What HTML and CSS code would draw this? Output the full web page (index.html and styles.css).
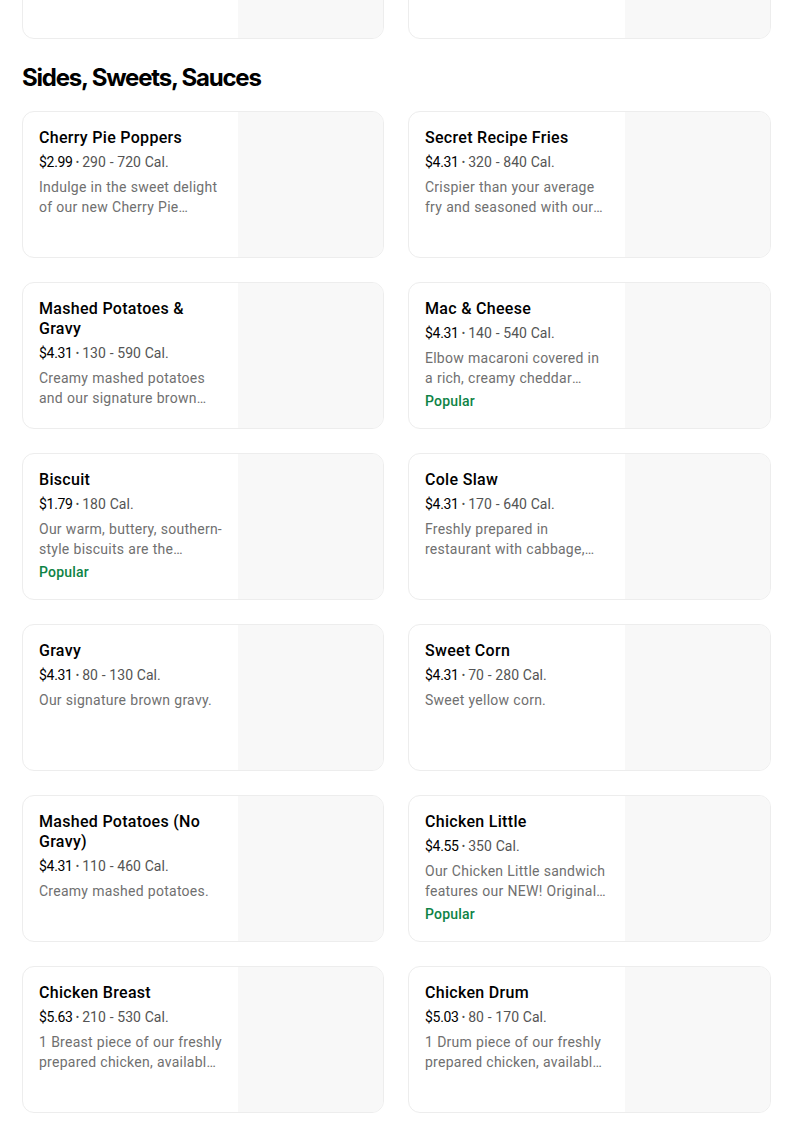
FILE: index.html
```html
<!DOCTYPE html>
<html>
<head>
<meta charset="utf-8">
<link rel="stylesheet" href="styles.css">
</head>
<body>
<div class="page">
  <div class="prev-row">
    <div class="grid">
      <div class="card"><div class="info"></div><div class="thumb"></div></div>
      <div class="card"><div class="info"></div><div class="thumb"></div></div>
    </div>
  </div>

  <h2 class="section-title">Sides, Sweets, Sauces</h2>

  <div class="grid">
    <div class="card">
      <div class="info">
        <div class="name">Cherry Pie Poppers</div>
        <div class="meta"><span class="price">$2.99</span><span class="dot">•</span>290 - 720 Cal.</div>
        <div class="desc">Indulge in the sweet delight of our new Cherry Pie Poppers, a bite-sized treat</div>
      </div>
      <div class="thumb"></div>
    </div>
    <div class="card">
      <div class="info">
        <div class="name">Secret Recipe Fries</div>
        <div class="meta"><span class="price">$4.31</span><span class="dot">•</span>320 - 840 Cal.</div>
        <div class="desc">Crispier than your average fry and seasoned with our secret recipe</div>
      </div>
      <div class="thumb"></div>
    </div>

    <div class="card">
      <div class="info">
        <div class="name">Mashed Potatoes &amp; Gravy</div>
        <div class="meta"><span class="price">$4.31</span><span class="dot">•</span>130 - 590 Cal.</div>
        <div class="desc">Creamy mashed potatoes and our signature brown gravy.</div>
      </div>
      <div class="thumb"></div>
    </div>
    <div class="card">
      <div class="info">
        <div class="name">Mac &amp; Cheese</div>
        <div class="meta"><span class="price">$4.31</span><span class="dot">•</span>140 - 540 Cal.</div>
        <div class="desc">Elbow macaroni covered in a rich, creamy cheddar cheese sauce.</div>
        <div class="popular">Popular</div>
      </div>
      <div class="thumb"></div>
    </div>

    <div class="card">
      <div class="info">
        <div class="name">Biscuit</div>
        <div class="meta"><span class="price">$1.79</span><span class="dot">•</span>180 Cal.</div>
        <div class="desc">Our warm, buttery, southern-style biscuits are the perfect side.</div>
        <div class="popular">Popular</div>
      </div>
      <div class="thumb"></div>
    </div>
    <div class="card">
      <div class="info">
        <div class="name">Cole Slaw</div>
        <div class="meta"><span class="price">$4.31</span><span class="dot">•</span>170 - 640 Cal.</div>
        <div class="desc">Freshly prepared in restaurant with cabbage, carrots and our signature dressing.</div>
      </div>
      <div class="thumb"></div>
    </div>

    <div class="card">
      <div class="info">
        <div class="name">Gravy</div>
        <div class="meta"><span class="price">$4.31</span><span class="dot">•</span>80 - 130 Cal.</div>
        <div class="desc">Our signature brown gravy.</div>
      </div>
      <div class="thumb"></div>
    </div>
    <div class="card">
      <div class="info">
        <div class="name">Sweet Corn</div>
        <div class="meta"><span class="price">$4.31</span><span class="dot">•</span>70 - 280 Cal.</div>
        <div class="desc">Sweet yellow corn.</div>
      </div>
      <div class="thumb"></div>
    </div>

    <div class="card">
      <div class="info">
        <div class="name">Mashed Potatoes (No Gravy)</div>
        <div class="meta"><span class="price">$4.31</span><span class="dot">•</span>110 - 460 Cal.</div>
        <div class="desc">Creamy mashed potatoes.</div>
      </div>
      <div class="thumb"></div>
    </div>
    <div class="card">
      <div class="info">
        <div class="name">Chicken Little</div>
        <div class="meta"><span class="price">$4.55</span><span class="dot">•</span>350 Cal.</div>
        <div class="desc">Our Chicken Little sandwich features our NEW! Original Recipe chicken.</div>
        <div class="popular">Popular</div>
      </div>
      <div class="thumb"></div>
    </div>

    <div class="card">
      <div class="info">
        <div class="name">Chicken Breast</div>
        <div class="meta"><span class="price">$5.63</span><span class="dot">•</span>210 - 530 Cal.</div>
        <div class="desc">1 Breast piece of our freshly prepared chicken, available in Original Recipe.</div>
      </div>
      <div class="thumb"></div>
    </div>
    <div class="card">
      <div class="info">
        <div class="name">Chicken Drum</div>
        <div class="meta"><span class="price">$5.03</span><span class="dot">•</span>80 - 170 Cal.</div>
        <div class="desc">1 Drum piece of our freshly prepared chicken, available in Original Recipe.</div>
      </div>
      <div class="thumb"></div>
    </div>
  </div>
</div>
</body>
</html>
```
FILE: styles.css
```css
* { box-sizing: border-box; }
html, body { margin: 0; padding: 0; background: #fff; }
body {
  font-family: Roboto, "Noto Sans", Arial, sans-serif;
  color: #000;
}
.page {
  padding: 0 33px 0 22px;
}
.prev-row {
  height: 39px;
  overflow: hidden;
}
.prev-row .grid {
  margin-top: -108px;
}
.grid {
  display: grid;
  grid-template-columns: 362px 363px;
  column-gap: 24px;
  row-gap: 24px;
}
.card {
  display: flex;
  height: 147px;
  border: 1px solid #ededed;
  border-radius: 12px;
  overflow: hidden;
  background: #fff;
}
.info {
  flex: 1;
  min-width: 0;
  padding: 16px 16px 0 16px;
}
.thumb {
  width: 145px;
  flex: none;
  background: #f8f8f8;
}
.section-title {
  margin: 23px 0 17px;
  font-family: Inter, "Noto Sans", Arial, sans-serif;
  font-size: 24px;
  line-height: 32px;
  font-weight: 700;
  letter-spacing: -1.2px;
}
.name {
  font-size: 16px;
  line-height: 20px;
  font-weight: 500;
  letter-spacing: 0.3px;
  color: #000;
}
.meta {
  margin-top: 4px;
  font-size: 14px;
  line-height: 20px;
  letter-spacing: 0.1px;
  color: #545454;
}
.price { color: #000; letter-spacing: -0.3px; }
.dot {
  font-size: 10px;
  margin: 0 3px;
  vertical-align: 1px;
}
.desc {
  margin-top: 4px;
  font-size: 14px;
  line-height: 20px;
  height: 40px;
  letter-spacing: 0.25px;
  word-spacing: 0.3px;
  color: #707070;
  display: -webkit-box;
  -webkit-line-clamp: 2;
  -webkit-box-orient: vertical;
  overflow: hidden;
}
.popular {
  margin-top: 3px;
  font-size: 14px;
  line-height: 20px;
  font-weight: 500;
  letter-spacing: 0.2px;
  color: #0e8345;
}
```
